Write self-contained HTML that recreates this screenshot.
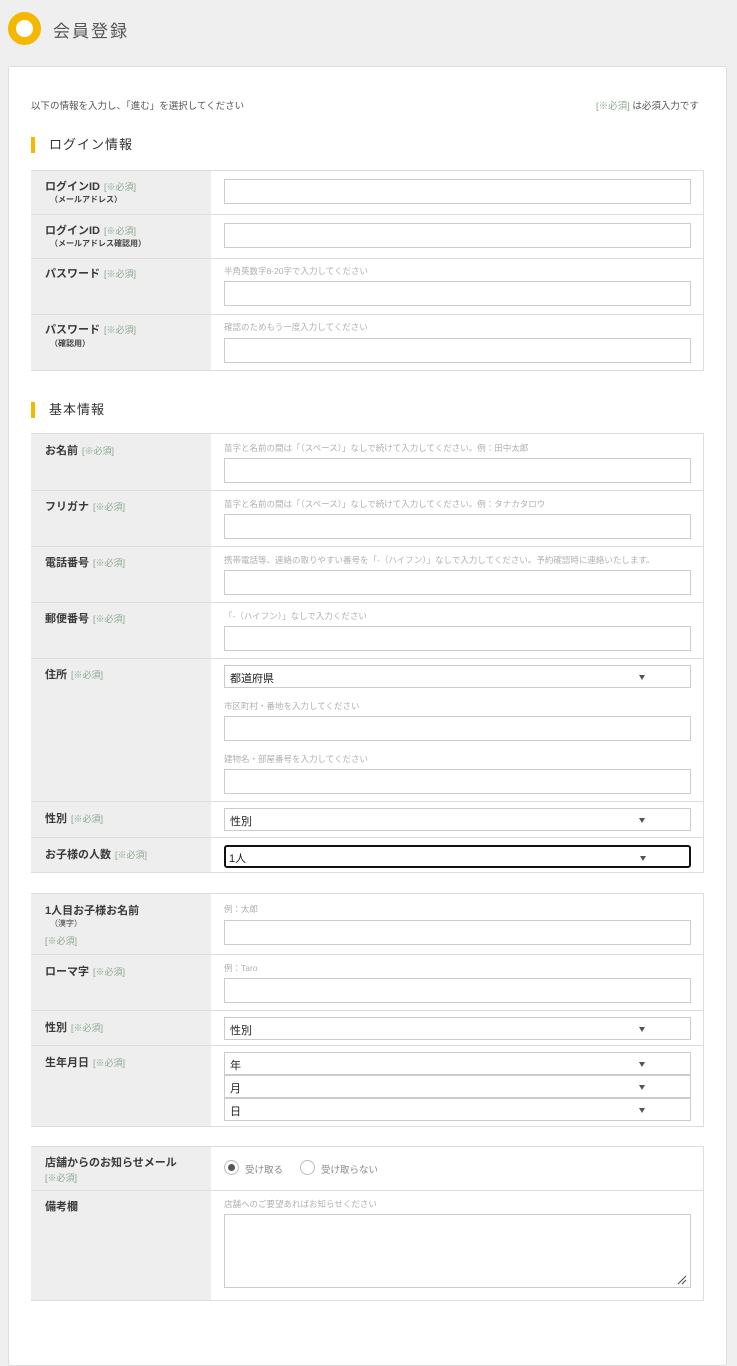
<!DOCTYPE html>
<html><head><meta charset="utf-8"><style>
*{margin:0;padding:0;box-sizing:border-box}
body{width:737px;height:1312px;background:#efefef;font-family:"Liberation Sans","Noto Sans CJK JP",sans-serif;color:#333;position:relative;overflow:hidden}
.a{position:absolute}
.card{left:8px;top:66px;width:719px;height:1300px;background:#fff;border:1px solid #ddd;border-radius:3px}
.tbl{left:31px;width:673px;background:#fff;border:1px solid #ddd}
.lab{left:31px;width:180px;background:#eee}
.row{left:31px;width:673px;height:1px;background:#ddd}
.lb{left:45px;font-size:11px;font-weight:bold;color:#3a3a3a;white-space:nowrap}
.lb .r{font-weight:normal;color:#8aa890;font-size:9px;margin-left:4px}
.sub{left:50px;font-size:8px;font-weight:bold;color:#444}
.req{left:45px;font-size:9px;color:#8aa890}
.hint{left:224px;font-size:8.5px;color:#b0b0b0;white-space:nowrap}
.in{left:224px;width:467px;height:25px;border:1px solid #ccc;background:#fff}
.sel{left:224px;width:467px;height:23px;border:1px solid #ccc;background:#fff;font-size:11px;color:#222;padding:4px 0 0 5px}
.sel:after{content:"";position:absolute;left:414px;top:9px;border-left:3px solid transparent;border-right:3px solid transparent;border-top:5px solid #555}
.h2{left:31px;font-size:13px;color:#333;padding-left:14px;border-left:4px solid #f5b800;line-height:16px;letter-spacing:1px}
</style></head><body>
<div class="a" style="left:8px;top:12px;width:33px;height:33px;border-radius:50%;border:8px solid #f5b800;background:#fff"></div>
<div class="a" style="left:53px;top:17px;font-size:17px;color:#555;letter-spacing:2px">会員登録</div>
<div class="a card"></div>
<div class="a" style="left:31px;top:98px;font-size:9.5px;color:#555">以下の情報を入力し、「進む」を選択してください</div>
<div class="a" style="left:596px;top:98px;font-size:9.5px;color:#555"><span style="color:#8aa890">[※必須]</span> は必須入力です</div>

<div class="a h2" style="top:137px">ログイン情報</div>
<div class="a tbl" style="top:170px;height:201px"></div>
<div class="a lab" style="top:171px;height:199px"></div>
<div class="a row" style="top:214px"></div><div class="a row" style="top:258px"></div><div class="a row" style="top:314px"></div>
<div class="a lb" style="top:178px">ログインID<span class="r">[※必須]</span></div>
<div class="a sub" style="top:194px">（メールアドレス）</div>
<div class="a in" style="top:179px"></div>
<div class="a lb" style="top:222px">ログインID<span class="r">[※必須]</span></div>
<div class="a sub" style="top:238px">（メールアドレス確認用）</div>
<div class="a in" style="top:223px"></div>
<div class="a lb" style="top:265px">パスワード<span class="r">[※必須]</span></div>
<div class="a hint" style="top:265px">半角英数字8-20字で入力してください</div>
<div class="a in" style="top:281px"></div>
<div class="a lb" style="top:321px">パスワード<span class="r">[※必須]</span></div>
<div class="a sub" style="top:338px">（確認用）</div>
<div class="a hint" style="top:321px">確認のためもう一度入力してください</div>
<div class="a in" style="top:338px"></div>

<div class="a h2" style="top:402px">基本情報</div>
<div class="a tbl" style="top:433px;height:440px"></div>
<div class="a lab" style="top:434px;height:438px"></div>
<div class="a row" style="top:490px"></div><div class="a row" style="top:546px"></div><div class="a row" style="top:602px"></div><div class="a row" style="top:658px"></div><div class="a row" style="top:801px"></div><div class="a row" style="top:837px"></div>
<div class="a lb" style="top:442px">お名前<span class="r">[※必須]</span></div>
<div class="a hint" style="top:442px">苗字と名前の間は「（スペース）」なしで続けて入力してください。例：田中太郎</div>
<div class="a in" style="top:458px"></div>
<div class="a lb" style="top:498px">フリガナ<span class="r">[※必須]</span></div>
<div class="a hint" style="top:498px">苗字と名前の間は「（スペース）」なしで続けて入力してください。例：タナカタロウ</div>
<div class="a in" style="top:514px"></div>
<div class="a lb" style="top:554px">電話番号<span class="r">[※必須]</span></div>
<div class="a hint" style="top:554px">携帯電話等、連絡の取りやすい番号を「-（ハイフン）」なしで入力してください。予約確認時に連絡いたします。</div>
<div class="a in" style="top:570px"></div>
<div class="a lb" style="top:610px">郵便番号<span class="r">[※必須]</span></div>
<div class="a hint" style="top:610px">「-（ハイフン）」なしで入力ください</div>
<div class="a in" style="top:626px"></div>
<div class="a lb" style="top:666px">住所<span class="r">[※必須]</span></div>
<div class="a sel" style="top:665px">都道府県</div>
<div class="a hint" style="top:700px">市区町村・番地を入力してください</div>
<div class="a in" style="top:716px"></div>
<div class="a hint" style="top:753px">建物名・部屋番号を入力してください</div>
<div class="a in" style="top:769px"></div>
<div class="a lb" style="top:810px">性別<span class="r">[※必須]</span></div>
<div class="a sel" style="top:808px">性別</div>
<div class="a lb" style="top:846px">お子様の人数<span class="r">[※必須]</span></div>
<div class="a sel" style="top:845px;border:2px solid #111;border-radius:3px;padding-top:3px;padding-left:3px">1人</div>

<div class="a tbl" style="top:893px;height:234px"></div>
<div class="a lab" style="top:894px;height:232px"></div>
<div class="a row" style="top:954px"></div><div class="a row" style="top:1010px"></div><div class="a row" style="top:1045px"></div>
<div class="a lb" style="top:902px">1人目お子様お名前</div>
<div class="a sub" style="top:918px;font-weight:normal">（漢字）</div>
<div class="a req" style="top:934px">[※必須]</div>
<div class="a hint" style="top:903px">例：太郎</div>
<div class="a in" style="top:920px"></div>
<div class="a lb" style="top:963px">ローマ字<span class="r">[※必須]</span></div>
<div class="a hint" style="top:962px">例：Taro</div>
<div class="a in" style="top:978px"></div>
<div class="a lb" style="top:1019px">性別<span class="r">[※必須]</span></div>
<div class="a sel" style="top:1017px">性別</div>
<div class="a lb" style="top:1054px">生年月日<span class="r">[※必須]</span></div>
<div class="a sel" style="top:1052px">年</div>
<div class="a sel" style="top:1075px">月</div>
<div class="a sel" style="top:1098px">日</div>

<div class="a tbl" style="top:1146px;height:155px"></div>
<div class="a lab" style="top:1147px;height:153px"></div>
<div class="a row" style="top:1190px"></div>
<div class="a lb" style="top:1154px">店舗からのお知らせメール</div>
<div class="a req" style="top:1171px">[※必須]</div>
<div class="a" style="left:224px;top:1160px;width:15px;height:15px;border:1px solid #bbb;border-radius:50%;background:#fff"></div>
<div class="a" style="left:228px;top:1164px;width:7px;height:7px;border-radius:50%;background:#555"></div>
<div class="a" style="left:245px;top:1162px;font-size:9.5px;color:#888">受け取る</div>
<div class="a" style="left:300px;top:1160px;width:15px;height:15px;border:1px solid #bbb;border-radius:50%;background:#fff"></div>
<div class="a" style="left:321px;top:1162px;font-size:9.5px;color:#888">受け取らない</div>
<div class="a lb" style="top:1198px">備考欄</div>
<div class="a hint" style="top:1198px">店舗へのご要望あればお知らせください</div>
<div class="a in" style="top:1214px;height:74px"></div>
<svg class="a" style="left:676px;top:1274px" width="12" height="12"><path d="M2 10L10 2M6 10L10 6" stroke="#555" stroke-width="1.2"/></svg>
</body></html>
